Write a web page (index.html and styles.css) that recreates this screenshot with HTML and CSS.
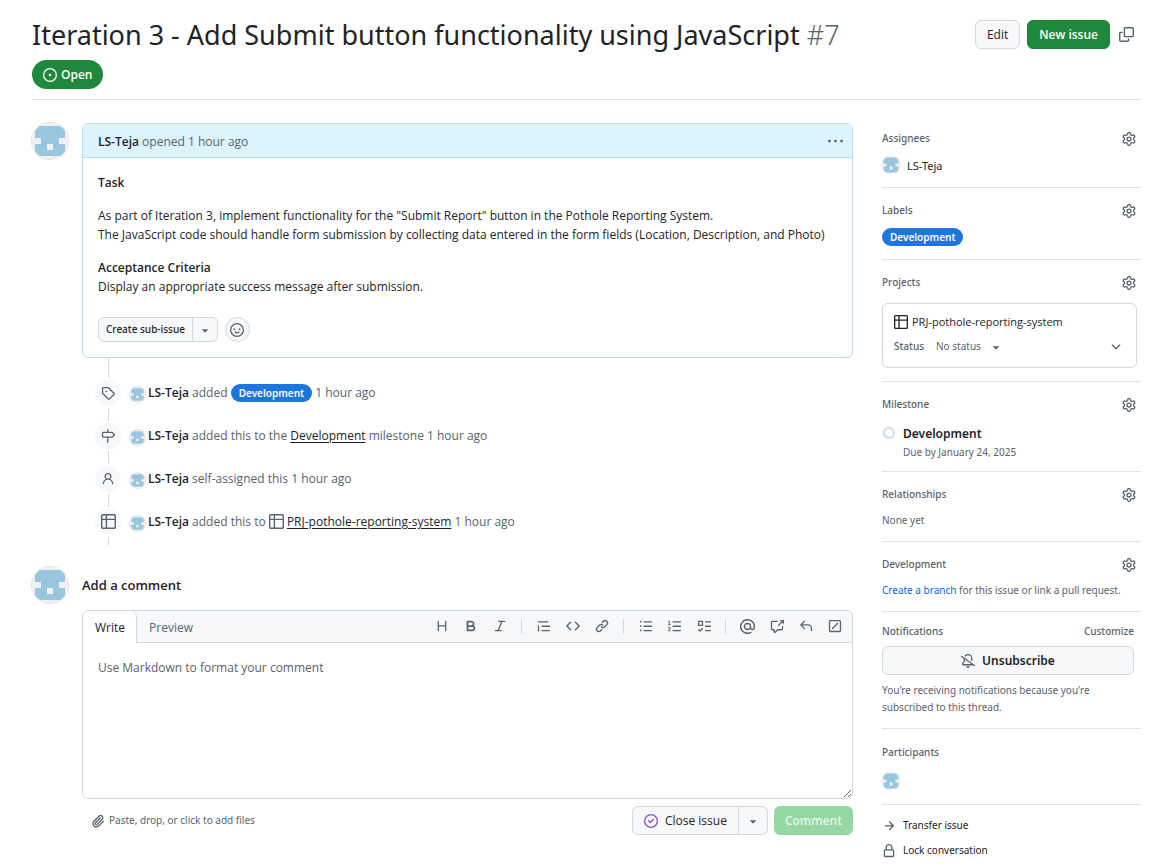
FILE: index.html
```html
<!DOCTYPE html>
<html lang="en">
<head>
<meta charset="utf-8">
<meta name="viewport" content="width=device-width, initial-scale=1">
<title>Iteration 3 - Add Submit button functionality using JavaScript · Issue #7</title>
<link rel="stylesheet" href="styles.css">
</head>
<body>
<svg class="sprite" aria-hidden="true">
  <symbol id="i-avatar" viewBox="0 0 36 36"><path fill="#f0f0f0" d="M0 0h36v36H0z"/><path fill="#98c6df" d="M3 3h30v12h-6v6h6v12H3V21h6v-6H3z"/><path fill="#f0f0f0" d="M15 21h6v6h-6z"/></symbol>
  <symbol id="i-open" viewBox="0 0 16 16"><path d="M8 9.5a1.5 1.5 0 1 0 0-3 1.5 1.5 0 0 0 0 3Z"/><path d="M8 0a8 8 0 1 1 0 16A8 8 0 0 1 8 0ZM1.5 8a6.5 6.5 0 1 0 13 0 6.5 6.5 0 0 0-13 0Z"/></symbol>
  <symbol id="i-copy" viewBox="0 0 16 16"><path d="M0 6.75C0 5.784.784 5 1.75 5h1.5a.75.75 0 0 1 0 1.5h-1.5a.25.25 0 0 0-.25.25v7.5c0 .138.112.25.25.25h7.5a.25.25 0 0 0 .25-.25v-1.5a.75.75 0 0 1 1.5 0v1.5A1.75 1.75 0 0 1 9.25 16h-7.5A1.75 1.75 0 0 1 0 14.25Z"/><path d="M5 1.75C5 .784 5.784 0 6.75 0h7.5C15.216 0 16 .784 16 1.75v7.5A1.75 1.75 0 0 1 14.25 11h-7.5A1.75 1.75 0 0 1 5 9.25Zm1.75-.25a.25.25 0 0 0-.25.25v7.5c0 .138.112.25.25.25h7.5a.25.25 0 0 0 .25-.25v-7.5a.25.25 0 0 0-.25-.25Z"/></symbol>
  <symbol id="i-kebab" viewBox="0 0 16 16"><path d="M8 9a1.5 1.5 0 1 0 0-3 1.5 1.5 0 0 0 0 3ZM1.5 9a1.5 1.5 0 1 0 0-3 1.5 1.5 0 0 0 0 3Zm13 0a1.5 1.5 0 1 0 0-3 1.5 1.5 0 0 0 0 3Z"/></symbol>
  <symbol id="i-caret" viewBox="0 0 16 16"><path d="m4.427 7.427 3.396 3.396a.25.25 0 0 0 .354 0l3.396-3.396A.25.25 0 0 0 11.396 7H4.604a.25.25 0 0 0-.177.427Z"/></symbol>
  <symbol id="i-smiley" viewBox="0 0 16 16"><path d="M8 0a8 8 0 1 1 0 16A8 8 0 0 1 8 0ZM1.5 8a6.5 6.5 0 1 0 13 0 6.5 6.5 0 0 0-13 0Zm3.82 1.636a.75.75 0 0 1 1.038.175l.007.009c.103.118.22.222.35.31.264.178.683.37 1.285.37.602 0 1.02-.192 1.285-.371.13-.088.247-.192.35-.31l.007-.008a.75.75 0 0 1 1.222.87l-.022-.015c.02.013.021.015.021.015v.001l-.001.002-.002.003-.005.007-.014.019a2.066 2.066 0 0 1-.184.213c-.16.166-.338.316-.53.445-.63.418-1.37.638-2.127.629-.946 0-1.652-.308-2.126-.63a3.331 3.331 0 0 1-.715-.657l-.014-.02-.005-.006-.002-.003v-.002h-.001l.613-.432-.614.43a.75.75 0 0 1 .183-1.044ZM12 7a1 1 0 1 1-2 0 1 1 0 0 1 2 0ZM5 8a1 1 0 1 1 0-2 1 1 0 0 1 0 2Z"/></symbol>
  <symbol id="i-tag" viewBox="0 0 16 16"><path d="M1 7.775V2.75C1 1.784 1.784 1 2.75 1h5.025c.464 0 .91.184 1.238.513l6.25 6.25a1.75 1.75 0 0 1 0 2.474l-5.026 5.026a1.75 1.75 0 0 1-2.474 0l-6.25-6.25A1.752 1.752 0 0 1 1 7.775Zm1.5 0c0 .066.026.13.073.177l6.25 6.25a.25.25 0 0 0 .354 0l5.025-5.025a.25.25 0 0 0 0-.354l-6.25-6.25a.25.25 0 0 0-.177-.073H2.75a.25.25 0 0 0-.25.25ZM6 5a1 1 0 1 1 0 2 1 1 0 0 1 0-2Z"/></symbol>
  <symbol id="i-milestone" viewBox="0 0 16 16"><path d="M7.75 0a.75.75 0 0 1 .75.75V3h3.634c.414 0 .814.147 1.13.414l2.07 1.75a1.75 1.75 0 0 1 0 2.672l-2.07 1.75a1.75 1.75 0 0 1-1.13.414H8.5v5.25a.75.75 0 0 1-1.5 0V10H2.75A1.75 1.75 0 0 1 1 8.25v-3.5C1 3.784 1.784 3 2.75 3H7V.75A.75.75 0 0 1 7.75 0Zm4.384 8.5a.25.25 0 0 0 .161-.06l2.07-1.75a.248.248 0 0 0 0-.38l-2.07-1.75a.25.25 0 0 0-.161-.06H2.75a.25.25 0 0 0-.25.25v3.5c0 .138.112.25.25.25h9.384Z"/></symbol>
  <symbol id="i-person" viewBox="0 0 16 16"><path d="M10.561 8.073a6.005 6.005 0 0 1 3.432 5.142.75.75 0 1 1-1.498.07 4.5 4.5 0 0 0-8.99 0 .75.75 0 0 1-1.498-.07 6.004 6.004 0 0 1 3.431-5.142 3.999 3.999 0 1 1 5.123 0ZM10.5 5a2.5 2.5 0 1 0-5 0 2.5 2.5 0 0 0 5 0Z"/></symbol>
  <symbol id="i-table" viewBox="0 0 16 16"><path d="M0 1.75C0 .784.784 0 1.75 0h12.5C15.216 0 16 .784 16 1.75v12.5A1.75 1.75 0 0 1 14.25 16H1.75A1.75 1.75 0 0 1 0 14.25ZM6.5 6.5v8h7.75a.25.25 0 0 0 .25-.25V6.5Zm8-1.5V1.75a.25.25 0 0 0-.25-.25H6.5V5Zm-13 1.5v7.75c0 .138.112.25.25.25H5v-8ZM5 5V1.5H1.75a.25.25 0 0 0-.25.25V5Z"/></symbol>
  <symbol id="i-gear" viewBox="0 0 16 16"><path d="M8 0a8.2 8.2 0 0 1 .701.031C9.444.095 9.99.645 10.16 1.29l.288 1.107c.018.066.079.158.212.224.231.114.454.243.668.386.123.082.233.09.299.071l1.103-.303c.644-.176 1.392.021 1.82.63.27.385.506.792.704 1.218.315.675.111 1.422-.364 1.891l-.814.806c-.049.048-.098.147-.088.294.016.257.016.515 0 .772-.01.147.038.246.088.294l.814.806c.475.469.679 1.216.364 1.891a7.977 7.977 0 0 1-.704 1.217c-.428.61-1.176.807-1.82.63l-1.102-.302c-.067-.019-.177-.011-.3.071a5.909 5.909 0 0 1-.668.386c-.133.066-.194.158-.211.224l-.29 1.106c-.168.646-.715 1.196-1.458 1.26a8.006 8.006 0 0 1-1.402 0c-.743-.064-1.289-.614-1.458-1.26l-.289-1.106c-.018-.066-.079-.158-.212-.224a5.738 5.738 0 0 1-.668-.386c-.123-.082-.233-.09-.299-.071l-1.103.303c-.644.176-1.392-.021-1.82-.63a8.12 8.12 0 0 1-.704-1.218c-.315-.675-.111-1.422.363-1.891l.815-.806c.05-.048.098-.147.088-.294a6.214 6.214 0 0 1 0-.772c.01-.147-.038-.246-.088-.294l-.815-.806C.635 6.045.431 5.298.746 4.623a7.92 7.92 0 0 1 .704-1.217c.428-.61 1.176-.807 1.82-.63l1.102.302c.067.019.177.011.3-.071.214-.143.437-.272.668-.386.133-.066.194-.158.211-.224l.29-1.106C6.009.645 6.556.095 7.299.03 7.53.01 7.764 0 8 0Zm-.571 1.525c-.036.003-.108.036-.137.146l-.289 1.105c-.147.561-.549.967-.998 1.189-.173.086-.34.183-.5.29-.417.278-.97.423-1.529.27l-1.103-.303c-.109-.03-.175.016-.195.045-.22.312-.412.644-.573.99-.014.031-.021.11.059.19l.815.806c.411.406.562.957.53 1.456a4.709 4.709 0 0 0 0 .582c.032.499-.119 1.05-.53 1.456l-.815.806c-.081.08-.073.159-.059.19.162.346.353.677.573.989.02.03.085.076.195.046l1.102-.303c.56-.153 1.113-.008 1.53.27.161.107.328.204.501.29.447.222.85.629.997 1.189l.289 1.105c.029.109.101.143.137.146a6.6 6.6 0 0 0 1.142 0c.036-.003.108-.036.137-.146l.289-1.105c.147-.561.549-.967.998-1.189.173-.086.34-.183.5-.29.417-.278.97-.423 1.529-.27l1.103.303c.109.029.175-.016.195-.045.22-.313.411-.644.573-.99.014-.031.021-.11-.059-.19l-.815-.806c-.411-.406-.562-.957-.53-1.456a4.709 4.709 0 0 0 0-.582c-.032-.499.119-1.05.53-1.456l.815-.806c.081-.08.073-.159.059-.19a6.464 6.464 0 0 0-.573-.989c-.02-.03-.085-.076-.195-.046l-1.102.303c-.56.153-1.113.008-1.53-.27a4.44 4.44 0 0 0-.501-.29c-.447-.222-.85-.629-.997-1.189l-.289-1.105c-.029-.11-.101-.143-.137-.146a6.6 6.6 0 0 0-1.142 0ZM11 8a3 3 0 1 1-6 0 3 3 0 0 1 6 0ZM9.5 8a1.5 1.5 0 1 0-3.001.001A1.5 1.5 0 0 0 9.5 8Z"/></symbol>
  <symbol id="i-chevron" viewBox="0 0 16 16"><path d="M12.78 5.22a.749.749 0 0 1 0 1.06l-4.25 4.25a.749.749 0 0 1-1.06 0L3.22 6.28a.749.749 0 1 1 1.06-1.06L8 8.939l3.72-3.719a.749.749 0 0 1 1.06 0Z"/></symbol>
  <symbol id="i-bell-slash" viewBox="0 0 16 16"><path d="m4.182 4.31.016.011 10.104 7.316.013.01 1.375.996a.75.75 0 1 1-.88 1.214L13.626 13H2.518a1.516 1.516 0 0 1-1.263-2.36l1.703-2.554A.255.255 0 0 0 3 7.947V5.305L.31 3.357a.75.75 0 1 1 .88-1.214Zm7.373 7.19L4.5 6.391v1.556c0 .346-.102.683-.294.97l-1.703 2.556a.017.017 0 0 0-.003.01c0 .005.002.009.005.012l.006.004.007.001ZM8 1.5c-.997 0-1.895.416-2.534 1.086A.75.75 0 1 1 4.38 1.55 5 5 0 0 1 13 5v2.373a.75.75 0 0 1-1.5 0V5A3.5 3.5 0 0 0 8 1.5ZM8 16a2 2 0 0 1-1.985-1.75c-.017-.137.097-.25.235-.25h3.5c.138 0 .252.113.235.25A2 2 0 0 1 8 16Z"/></symbol>
  <symbol id="i-arrow" viewBox="0 0 16 16"><path d="M8.22 2.97a.75.75 0 0 1 1.06 0l4.25 4.25a.75.75 0 0 1 0 1.06l-4.25 4.25a.751.751 0 0 1-1.042-.018.751.751 0 0 1-.018-1.042l2.97-2.97H3.75a.75.75 0 0 1 0-1.5h7.44L8.22 4.03a.75.75 0 0 1 0-1.06Z"/></symbol>
  <symbol id="i-lock" viewBox="0 0 16 16"><path d="M4 4a4 4 0 0 1 8 0v2h.25c.966 0 1.75.784 1.75 1.75v5.5A1.75 1.75 0 0 1 12.25 15h-8.5A1.75 1.75 0 0 1 2 13.25v-5.5C2 6.784 2.784 6 3.75 6H4Zm8.25 3.5h-8.5a.25.25 0 0 0-.25.25v5.5c0 .138.112.25.25.25h8.5a.25.25 0 0 0 .25-.25v-5.5a.25.25 0 0 0-.25-.25ZM10.5 6V4a2.5 2.5 0 1 0-5 0v2Z"/></symbol>
  <symbol id="i-closed" viewBox="0 0 16 16"><path d="M11.28 6.78a.75.75 0 0 0-1.06-1.06L7.25 8.69 5.78 7.22a.75.75 0 0 0-1.06 1.06l2 2a.75.75 0 0 0 1.06 0l3.5-3.5Z"/><path d="M16 8A8 8 0 1 1 0 8a8 8 0 0 1 16 0Zm-1.5 0a6.5 6.5 0 1 0-13 0 6.5 6.5 0 0 0 13 0Z"/></symbol>
  <symbol id="i-clip" viewBox="0 0 16 16"><path d="M12.212 3.02a1.753 1.753 0 0 0-2.478.003l-5.83 5.83a3.007 3.007 0 0 0-.88 2.127c0 .795.315 1.551.88 2.116.567.567 1.333.89 2.126.89.79 0 1.548-.321 2.116-.89l5.48-5.48a.75.75 0 0 1 1.061 1.06l-5.48 5.48a4.492 4.492 0 0 1-3.177 1.33c-1.2 0-2.345-.487-3.187-1.33a4.483 4.483 0 0 1-1.32-3.177c0-1.195.475-2.341 1.32-3.186l5.83-5.83a3.25 3.25 0 0 1 5.553 2.297c0 .863-.343 1.691-.953 2.301L7.439 12.39c-.375.377-.884.59-1.416.593a1.998 1.998 0 0 1-1.412-.593 1.992 1.992 0 0 1 0-2.828l5.48-5.48a.751.751 0 0 1 1.042.018.751.751 0 0 1 .018 1.042l-5.48 5.48a.492.492 0 0 0 0 .707.499.499 0 0 0 .352.154.51.51 0 0 0 .356-.154l5.833-5.827a1.755 1.755 0 0 0 0-2.481Z"/></symbol>
  <symbol id="i-heading" viewBox="0 0 16 16"><path d="M3.75 2a.75.75 0 0 1 .75.75V7h7V2.75a.75.75 0 0 1 1.5 0v10.5a.75.75 0 0 1-1.5 0V8.5h-7v4.75a.75.75 0 0 1-1.5 0V2.75A.75.75 0 0 1 3.75 2Z"/></symbol>
  <symbol id="i-bold" viewBox="0 0 16 16"><path d="M4 2h4.5a3.501 3.501 0 0 1 2.852 5.53A3.499 3.499 0 0 1 9.5 14H4a1 1 0 0 1-1-1V3a1 1 0 0 1 1-1Zm1 7v3h4.5a1.5 1.5 0 0 0 0-3Zm3.5-2a1.5 1.5 0 0 0 0-3H5v3Z"/></symbol>
  <symbol id="i-italic" viewBox="0 0 16 16"><path d="M6 2.75A.75.75 0 0 1 6.75 2h6.5a.75.75 0 0 1 0 1.5h-2.505l-3.858 9H9.25a.75.75 0 0 1 0 1.5h-6.5a.75.75 0 0 1 0-1.5h2.505l3.858-9H6.75A.75.75 0 0 1 6 2.75Z"/></symbol>
  <symbol id="i-quote" viewBox="0 0 16 16"><path d="M1.75 2.5h10.5a.75.75 0 0 1 0 1.5H1.75a.75.75 0 0 1 0-1.5Zm4 5h8.5a.75.75 0 0 1 0 1.5h-8.5a.75.75 0 0 1 0-1.5Zm0 5h8.5a.75.75 0 0 1 0 1.5h-8.5a.75.75 0 0 1 0-1.5ZM2.5 7.75v6a.75.75 0 0 1-1.5 0v-6a.75.75 0 0 1 1.5 0Z"/></symbol>
  <symbol id="i-code" viewBox="0 0 16 16"><path d="m11.28 3.22 4.25 4.25a.75.75 0 0 1 0 1.06l-4.25 4.25a.749.749 0 0 1-1.275-.326.749.749 0 0 1 .215-.734L13.94 8l-3.72-3.72a.749.749 0 0 1 .326-1.275.749.749 0 0 1 .734.215Zm-6.56 0a.751.751 0 0 1 1.042.018.751.751 0 0 1 .018 1.042L2.06 8l3.72 3.72a.749.749 0 0 1-.326 1.275.749.749 0 0 1-.734-.215L.47 8.53a.75.75 0 0 1 0-1.06Z"/></symbol>
  <symbol id="i-link" viewBox="0 0 16 16"><path d="m7.775 3.275 1.25-1.25a3.5 3.5 0 1 1 4.95 4.95l-2.5 2.5a3.5 3.5 0 0 1-4.95 0 .751.751 0 0 1 .018-1.042.751.751 0 0 1 1.042-.018 1.998 1.998 0 0 0 2.83 0l2.5-2.5a2.002 2.002 0 0 0-2.83-2.83l-1.25 1.25a.751.751 0 0 1-1.042-.018.751.751 0 0 1-.018-1.042Zm-4.69 9.64a1.998 1.998 0 0 0 2.83 0l1.25-1.25a.751.751 0 0 1 1.042.018.751.751 0 0 1 .018 1.042l-1.25 1.25a3.5 3.5 0 1 1-4.95-4.95l2.5-2.5a3.5 3.5 0 0 1 4.95 0 .751.751 0 0 1-.018 1.042.751.751 0 0 1-1.042.018 1.998 1.998 0 0 0-2.83 0l-2.5 2.5a1.998 1.998 0 0 0 0 2.83Z"/></symbol>
  <symbol id="i-ul" viewBox="0 0 16 16"><path d="M5.75 2.5h8.5a.75.75 0 0 1 0 1.5h-8.5a.75.75 0 0 1 0-1.5Zm0 5h8.5a.75.75 0 0 1 0 1.5h-8.5a.75.75 0 0 1 0-1.5Zm0 5h8.5a.75.75 0 0 1 0 1.5h-8.5a.75.75 0 0 1 0-1.5ZM2 14a1 1 0 1 1 0-2 1 1 0 0 1 0 2Zm1-6a1 1 0 1 1-2 0 1 1 0 0 1 2 0ZM2 4a1 1 0 1 1 0-2 1 1 0 0 1 0 2Z"/></symbol>
  <symbol id="i-ol" viewBox="0 0 16 16"><path d="M5 3.25a.75.75 0 0 1 .75-.75h8.5a.75.75 0 0 1 0 1.5h-8.5A.75.75 0 0 1 5 3.25Zm0 5a.75.75 0 0 1 .75-.75h8.5a.75.75 0 0 1 0 1.5h-8.5A.75.75 0 0 1 5 8.25Zm0 5a.75.75 0 0 1 .75-.75h8.5a.75.75 0 0 1 0 1.5h-8.5a.75.75 0 0 1-.75-.75ZM.924 10.32a.5.5 0 0 1-.851-.525l.001-.001.001-.002.002-.004.007-.011c.097-.144.215-.273.348-.384.228-.19.588-.392 1.068-.392.468 0 .858.181 1.126.484.259.294.377.673.377 1.038 0 .987-.686 1.495-1.156 1.845l-.047.035c-.303.225-.522.4-.654.597h1.357a.5.5 0 0 1 0 1H.5a.5.5 0 0 1-.5-.5c0-1.005.692-1.52 1.167-1.875l.035-.025c.531-.396.8-.625.8-1.078a.57.57 0 0 0-.128-.376C1.806 10.068 1.695 10 1.5 10a.658.658 0 0 0-.429.163.835.835 0 0 0-.144.153ZM2.003 2.5V6h.503a.5.5 0 0 1 0 1H.5a.5.5 0 0 1 0-1h.503V3.308l-.28.14a.5.5 0 0 1-.446-.895l1.003-.5a.5.5 0 0 1 .723.447Z"/></symbol>
  <symbol id="i-tasks" viewBox="0 0 16 16"><path d="M2 2h4a1 1 0 0 1 1 1v4a1 1 0 0 1-1 1H2a1 1 0 0 1-1-1V3a1 1 0 0 1 1-1Zm4.655 8.595a.75.75 0 0 1 0 1.06L4.03 14.28a.75.75 0 0 1-1.06 0l-1.5-1.5a.749.749 0 0 1 .326-1.275.749.749 0 0 1 .734.215l.97.97 2.095-2.095a.75.75 0 0 1 1.06 0ZM9.75 2.5h5.5a.75.75 0 0 1 0 1.5h-5.5a.75.75 0 0 1 0-1.5Zm0 5h5.5a.75.75 0 0 1 0 1.5h-5.5a.75.75 0 0 1 0-1.5Zm0 5h5.5a.75.75 0 0 1 0 1.5h-5.5a.75.75 0 0 1 0-1.5Zm-7.25-9v3h3v-3Z"/></symbol>
  <symbol id="i-mention" viewBox="0 0 16 16"><path d="M4.75 2.37a6.501 6.501 0 0 0 6.5 11.26.75.75 0 0 1 .75 1.298A7.999 7.999 0 0 1 .989 4.148 8 8 0 0 1 16 7.75v1.5a2.75 2.75 0 0 1-5.072 1.475 3.999 3.999 0 0 1-6.65-4.19A4 4 0 0 1 12 8v1.25a1.25 1.25 0 0 0 2.5 0V7.867a6.5 6.5 0 0 0-9.75-5.496ZM10.5 8a2.5 2.5 0 1 0-5 0 2.5 2.5 0 0 0 5 0Z"/></symbol>
  <symbol id="i-xref" viewBox="0 0 16 16"><path d="M2.75 3.5a.25.25 0 0 0-.25.25v7.5c0 .138.112.25.25.25h2a.75.75 0 0 1 .75.75v2.19l2.72-2.72a.749.749 0 0 1 .53-.22h4.5a.25.25 0 0 0 .25-.25v-2.5a.75.75 0 0 1 1.5 0v2.5A1.75 1.75 0 0 1 13.25 13H9.06l-2.573 2.573A1.458 1.458 0 0 1 4 14.543V13H2.75A1.75 1.75 0 0 1 1 11.25v-7.5C1 2.784 1.784 2 2.75 2h5.5a.75.75 0 0 1 0 1.5ZM16 1.25v4.146a.25.25 0 0 1-.427.177L14.03 4.03l-3.75 3.75a.749.749 0 0 1-1.275-.326.749.749 0 0 1 .215-.734l3.75-3.75-1.543-1.543A.25.25 0 0 1 11.604 1h4.146a.25.25 0 0 1 .25.25Z"/></symbol>
  <symbol id="i-reply" viewBox="0 0 16 16"><path d="M6.78 1.97a.75.75 0 0 1 0 1.06L3.81 6h6.44A4.75 4.75 0 0 1 15 10.75v2.5a.75.75 0 0 1-1.5 0v-2.5a3.25 3.25 0 0 0-3.25-3.25H3.81l2.97 2.97a.749.749 0 0 1-.326 1.275.749.749 0 0 1-.734-.215L1.47 7.28a.75.75 0 0 1 0-1.06l4.25-4.25a.75.75 0 0 1 1.06 0Z"/></symbol>
  <symbol id="i-slash" viewBox="0 0 16 16"><path fill="none" stroke="currentColor" stroke-width="1.5" stroke-linecap="round" d="M2.75 1.75h10.5a1 1 0 0 1 1 1v10.5a1 1 0 0 1-1 1H2.75a1 1 0 0 1-1-1V2.75a1 1 0 0 1 1-1ZM5.2 10.8l5.6-5.6"/></symbol>
</svg>

<div class="page">
  <header class="issue-header">
    <div class="title-row">
      <h1 class="title">Iteration 3 - Add Submit button functionality using JavaScript <span class="number">#7</span></h1>
      <div class="title-actions">
        <button class="btn" type="button">Edit</button>
        <button class="btn btn-primary" type="button">New issue</button>
        <button class="icon-btn" type="button" aria-label="Copy link"><svg class="icon icon-m"><use href="#i-copy"/></svg></button>
      </div>
    </div>
    <span class="state"><svg class="icon"><use href="#i-open"/></svg>Open</span>
  </header>

  <div class="columns">
    <main class="main">
      <div class="entry">
        <svg class="avatar avatar-l" role="img" aria-label="LS-Teja"><use href="#i-avatar"/></svg>
        <div class="thread">
          <article class="comment">
            <div class="comment-head">
              <p class="byline"><a class="author" href="#">LS-Teja</a> opened 1 hour ago</p>
              <button class="icon-btn" type="button" aria-label="Comment actions"><svg class="icon icon-m"><use href="#i-kebab"/></svg></button>
            </div>
            <div class="comment-body">
              <p><strong>Task</strong></p>
              <p>As part of Iteration 3, implement functionality for the "Submit Report" button in the Pothole Reporting System.<br>The JavaScript code should handle form submission by collecting data entered in the form fields (Location, Description, and Photo)</p>
              <p><strong>Acceptance Criteria</strong><br>Display an appropriate success message after submission.</p>
              <div class="comment-tools">
                <div class="btn-group">
                  <button class="btn btn-small" type="button">Create sub-issue</button>
                  <button class="btn btn-small btn-caret" type="button" aria-label="More sub-issue options"><svg class="icon"><use href="#i-caret"/></svg></button>
                </div>
                <button class="react" type="button" aria-label="Add reaction"><svg class="icon"><use href="#i-smiley"/></svg></button>
              </div>
            </div>
          </article>
          <ul class="events">
            <li class="event"><span class="badge"><svg class="icon"><use href="#i-tag"/></svg></span><p><svg class="avatar avatar-s"><use href="#i-avatar"/></svg><a class="author" href="#">LS-Teja</a> added <a class="label" href="#">Development</a> 1 hour ago</p></li>
            <li class="event"><span class="badge"><svg class="icon"><use href="#i-milestone"/></svg></span><p><svg class="avatar avatar-s"><use href="#i-avatar"/></svg><a class="author" href="#">LS-Teja</a> added this to the <a class="ref" href="#">Development</a> milestone 1 hour ago</p></li>
            <li class="event"><span class="badge"><svg class="icon"><use href="#i-person"/></svg></span><p><svg class="avatar avatar-s"><use href="#i-avatar"/></svg><a class="author" href="#">LS-Teja</a> self-assigned this 1 hour ago</p></li>
            <li class="event"><span class="badge"><svg class="icon icon-m"><use href="#i-table"/></svg></span><p><svg class="avatar avatar-s"><use href="#i-avatar"/></svg><a class="author" href="#">LS-Teja</a> added this to <svg class="icon icon-m inline"><use href="#i-table"/></svg> <a class="ref" href="#">PRJ-pothole-reporting-system</a> 1 hour ago</p></li>
          </ul>
        </div>
      </div>

      <div class="entry">
        <svg class="avatar avatar-l" role="img" aria-label="LS-Teja"><use href="#i-avatar"/></svg>
        <form class="composer">
          <h2 class="composer-title"><label for="comment">Add a comment</label></h2>
          <div class="editor">
            <div class="editor-head">
              <div class="tabs">
                <button class="tab tab-on" type="button">Write</button>
                <button class="tab" type="button">Preview</button>
              </div>
              <div class="toolbar">
                <button class="tool" type="button" aria-label="Heading"><svg class="icon"><use href="#i-heading"/></svg></button>
                <button class="tool" type="button" aria-label="Bold"><svg class="icon"><use href="#i-bold"/></svg></button>
                <button class="tool" type="button" aria-label="Italic"><svg class="icon"><use href="#i-italic"/></svg></button>
                <span class="sep"></span>
                <button class="tool" type="button" aria-label="Quote"><svg class="icon"><use href="#i-quote"/></svg></button>
                <button class="tool" type="button" aria-label="Code"><svg class="icon"><use href="#i-code"/></svg></button>
                <button class="tool" type="button" aria-label="Link"><svg class="icon"><use href="#i-link"/></svg></button>
                <span class="sep"></span>
                <button class="tool" type="button" aria-label="Unordered list"><svg class="icon"><use href="#i-ul"/></svg></button>
                <button class="tool" type="button" aria-label="Numbered list"><svg class="icon"><use href="#i-ol"/></svg></button>
                <button class="tool" type="button" aria-label="Task list"><svg class="icon"><use href="#i-tasks"/></svg></button>
                <span class="sep"></span>
                <button class="tool" type="button" aria-label="Mention"><svg class="icon icon-m"><use href="#i-mention"/></svg></button>
                <button class="tool" type="button" aria-label="Reference"><svg class="icon"><use href="#i-xref"/></svg></button>
                <button class="tool" type="button" aria-label="Saved replies"><svg class="icon"><use href="#i-reply"/></svg></button>
                <button class="tool" type="button" aria-label="Slash commands"><svg class="icon"><use href="#i-slash"/></svg></button>
              </div>
            </div>
            <textarea class="text" id="comment" placeholder="Use Markdown to format your comment"></textarea>
          </div>
          <div class="composer-foot">
            <button class="attach" type="button"><svg class="icon"><use href="#i-clip"/></svg>Paste, drop, or click to add files</button>
            <div class="submit">
              <div class="btn-group">
                <button class="btn btn-close" type="button"><svg class="icon done"><use href="#i-closed"/></svg>Close issue</button>
                <button class="btn btn-caret" type="button" aria-label="More close options"><svg class="icon"><use href="#i-caret"/></svg></button>
              </div>
              <button class="btn btn-primary" type="button" disabled>Comment</button>
            </div>
          </div>
        </form>
      </div>
    </main>

    <aside class="sidebar">
      <section class="box">
        <h2 class="box-head">Assignees<button class="icon-btn" type="button" aria-label="Edit assignees"><svg class="icon"><use href="#i-gear"/></svg></button></h2>
        <a class="assignee" href="#"><svg class="avatar avatar-m"><use href="#i-avatar"/></svg>LS-Teja</a>
      </section>
      <section class="box">
        <h2 class="box-head">Labels<button class="icon-btn" type="button" aria-label="Edit labels"><svg class="icon"><use href="#i-gear"/></svg></button></h2>
        <a class="label" href="#">Development</a>
      </section>
      <section class="box">
        <h2 class="box-head">Projects<button class="icon-btn" type="button" aria-label="Edit projects"><svg class="icon"><use href="#i-gear"/></svg></button></h2>
        <div class="project">
          <a class="project-name" href="#"><svg class="icon"><use href="#i-table"/></svg>PRJ-pothole-reporting-system</a>
          <div class="status">
            <label class="status-name" for="status">Status</label>
            <select class="status-value" id="status"><option>No status</option></select>
            <svg class="icon status-caret"><use href="#i-caret"/></svg>
            <button class="icon-btn" type="button" aria-label="Expand project"><svg class="icon"><use href="#i-chevron"/></svg></button>
          </div>
        </div>
      </section>
      <section class="box box-milestone">
        <h2 class="box-head">Milestone<button class="icon-btn" type="button" aria-label="Edit milestone"><svg class="icon"><use href="#i-gear"/></svg></button></h2>
        <div class="milestone">
          <span class="ring"></span>
          <div><a class="milestone-name" href="#">Development</a><p>Due by January 24, 2025</p></div>
        </div>
      </section>
      <section class="box box-text">
        <h2 class="box-head">Relationships<button class="icon-btn" type="button" aria-label="Edit relationships"><svg class="icon"><use href="#i-gear"/></svg></button></h2>
        <p>None yet</p>
      </section>
      <section class="box box-text">
        <h2 class="box-head">Development<button class="icon-btn" type="button" aria-label="Edit development"><svg class="icon"><use href="#i-gear"/></svg></button></h2>
        <p><a class="blue" href="#">Create a branch</a> for this issue or link a pull request.</p>
      </section>
      <section class="box box-notify">
        <h2 class="box-head">Notifications<button class="customize" type="button">Customize</button></h2>
        <button class="btn btn-wide" type="button"><svg class="icon"><use href="#i-bell-slash"/></svg>Unsubscribe</button>
        <p>You're receiving notifications because you're<br>subscribed to this thread.</p>
      </section>
      <section class="box box-people">
        <h2 class="box-head">Participants</h2>
        <svg class="avatar avatar-m" role="img" aria-label="LS-Teja"><use href="#i-avatar"/></svg>
      </section>
      <section class="box box-actions">
        <button class="action" type="button"><svg class="icon"><use href="#i-arrow"/></svg>Transfer issue</button>
        <button class="action" type="button"><svg class="icon"><use href="#i-lock"/></svg>Lock conversation</button>
      </section>
    </aside>
  </div>
</div>
</body>
</html>
```
FILE: styles.css
```css
* { box-sizing: border-box; }

:root {
  --fg: #1f2328;
  --muted: #59636e;
  --line: #d1d9e0;
  --line-soft: #dfe3e8;
  --subtle: #f6f8fa;
  --green: #1f883d;
  --blue: #0969da;
  --alt: "Noto Sans", "Open Sans", sans-serif;
}

body {
  margin: 0;
  background: #fff;
  color: var(--fg);
  font: 12px/19px "Open Sans", "Noto Sans", sans-serif;
}

h1, h2, p, ul { margin: 0; padding: 0; font-weight: 400; }
ul { list-style: none; }
a { color: inherit; text-decoration: none; }
button, select, textarea { font: inherit; color: inherit; margin: 0; }
button { cursor: pointer; }
strong { font-weight: 600; }

.sprite { position: absolute; width: 0; height: 0; }
.icon { width: 14px; height: 14px; fill: currentColor; flex: none; display: block; }
.icon-m { width: 15px; height: 15px; }
.icon.inline { display: inline-block; vertical-align: -3px; }

.avatar { display: block; flex: none; border-radius: 50%; box-shadow: 0 0 0 1px #dfe1e4; }
.avatar-l { width: 36px; height: 36px; }
.avatar-m { width: 18px; height: 18px; box-shadow: 0 0 0 1px #eff1f3; }
.avatar-s { width: 15px; height: 15px; display: inline-block; vertical-align: -5px; margin-right: 3px; }

.page { padding: 18px 33px 0 32px; }

/* Header */
.issue-header { padding-bottom: 10px; border-bottom: 1px solid var(--line-soft); }
.title-row { display: flex; justify-content: space-between; align-items: flex-start; }
.title { font-family: var(--alt); font-size: 27px; line-height: 34px; margin-bottom: 8px; }
.number { color: var(--muted); font-weight: 300; }
.title-actions { display: flex; gap: 7px; padding-top: 2px; }
.title-actions .icon-btn { padding: 0 7px 0 2px; }
.state {
  display: inline-flex; align-items: center; gap: 4px; height: 29px; padding: 0 11px;
  border-radius: 15px; background: var(--green); color: #fff; font-weight: 600; vertical-align: top;
}

/* Buttons */
.btn {
  display: inline-flex; align-items: center; justify-content: center; gap: 7px; height: 29px; padding: 0 11px;
  border: 1px solid var(--line); border-radius: 6px; background: var(--subtle); color: var(--fg); font-weight: 500; white-space: nowrap;
}
.btn .icon { color: var(--muted); }
.btn .done { color: #8250df; }
.btn-primary { background: var(--green); border-color: #1c8139; color: #fff; font-weight: 600; }
.btn-primary:disabled { padding: 0 10px; background: #95d8a6; border-color: #95d8a6; color: #e4f6e8; }
.btn-small { height: 25px; padding: 0 7px; font-family: var(--alt); font-size: 10px; }
.btn-group { display: flex; }
.btn-group .btn:first-child { border-radius: 6px 0 0 6px; }
.btn-group .btn:last-child { border-radius: 0 6px 6px 0; border-left: 0; }
.btn-group .btn-caret { padding: 0 7px; }
.btn-group .btn-small.btn-caret { padding: 0 5px; }
.icon-btn { display: flex; align-items: center; border: 0; padding: 0; background: none; color: var(--muted); }

.author { color: var(--fg); font-weight: 600; }
.ref { color: var(--fg); text-decoration: underline; text-underline-offset: 2px; }
.blue { color: var(--blue); }
.label {
  display: inline-block; height: 18px; padding: 0 8px; border-radius: 9px; background: #1d76db; color: #fff;
  font-family: var(--alt); font-size: 10px; line-height: 18px; font-weight: 600; vertical-align: middle;
}

/* Columns */
.columns { display: grid; grid-template-columns: minmax(0, 1fr) 259px; gap: 29px; padding-top: 23px; }
.entry { display: grid; grid-template-columns: 36px minmax(0, 1fr); gap: 14px; }

/* Comment */
.comment { border: 1px solid #b6ddff; border-radius: 6px; }
.comment-head {
  display: flex; align-items: center; justify-content: space-between; height: 34px; padding: 1px 9px 0 15px;
  border-bottom: 1px solid #b6ddff; border-radius: 5px 5px 0 0; background: #ddf4ff; color: var(--muted);
}
.comment-body { padding: 15px; display: grid; gap: 14px; }
.comment-tools { display: flex; gap: 7px; padding-top: 7px; }
.react {
  display: grid; place-items: center; width: 25px; height: 25px; padding: 0;
  border: 1px solid var(--line); border-radius: 50%; background: var(--subtle); color: var(--muted);
}

/* Timeline */
.events {
  margin-left: 26px; padding: 13px 0 2px; border-left: 1px solid var(--line); margin-bottom: 22px;
}
.event { display: flex; align-items: center; gap: 8px; height: 43px; margin-left: -15px; color: var(--muted); }
.badge {
  display: grid; place-items: center; width: 28px; height: 30px; flex: none;
  border: 2px solid #fff; border-width: 2px 1px; border-radius: 50%; background: var(--subtle); color: var(--muted);
}

/* Comment form */
.composer-title { height: 36px; font-size: 13px; line-height: 36px; }
.composer-title label { font-weight: 600; }
.editor { margin-top: 7px; border: 1px solid var(--line); border-radius: 6px; overflow: hidden; }
.editor-head { display: flex; height: 32px; background: var(--subtle); justify-content: space-between; box-shadow: inset 0 -1px var(--line); }
.tabs { display: flex; }
.tab { border: 0; padding: 0 11px 0 12px; background: none; color: var(--muted); }
.tab-on { border-right: 1px solid var(--line); border-radius: 6px 6px 0 0; background: #fff; color: var(--fg); }
.toolbar { display: flex; align-items: center; padding: 0 3px 2px 0; }
.tool { display: grid; place-items: center; width: 29px; height: 29px; border: 0; padding: 0; background: none; color: var(--muted); }
.sep { width: 1px; height: 15px; margin: 0 7px; background: var(--line); }
.text { display: block; width: 100%; height: 155px; padding: 15px; border: 0; outline: 0; resize: vertical; background: #fff; }
.text::placeholder { color: var(--muted); opacity: 1; }
.composer-foot { display: flex; justify-content: space-between; align-items: center; padding-top: 7px; }
.attach { display: flex; align-items: center; gap: 4px; border: 0; padding: 0 9px; background: none; color: var(--muted); font-family: var(--alt); font-size: 10px; }
.submit { display: flex; gap: 6px; }
.btn-group .btn-close { padding: 0 11px; }

/* Sidebar */
.sidebar { font-family: var(--alt); font-size: 10px; line-height: 17px; color: var(--muted); }
.box { padding: 14px 0 13px; border-bottom: 1px solid var(--line-soft); }
.box:first-child { padding-top: 7px; }
.box-head { display: flex; justify-content: space-between; align-items: center; padding-right: 5px; margin-bottom: 9px; font-size: 10px; line-height: 17px; font-weight: 500; }
.assignee { display: flex; align-items: center; gap: 7px; color: var(--fg); font-size: 11px; }
.box > .label { display: block; width: fit-content; }
.project { margin: 12px 4px 0 0; padding: 9px 11px 12px; border: 1px solid var(--line); border-radius: 6px; }
.project-name { display: flex; align-items: center; gap: 4px; color: var(--fg); font: 500 11px/17px "Open Sans", "Noto Sans", sans-serif; }
.status { display: flex; align-items: center; margin-top: 8px; }
.status-name { margin-right: 12px; font-weight: 500; }
.status-value { appearance: none; border: 0; padding: 0; background: none; }
.status-caret { margin-left: 8px; }
.status .icon-btn { margin-left: auto; margin-right: 2px; }
.box-milestone { padding-bottom: 10px; }
.milestone { display: flex; gap: 8px; padding-top: 1px; }
.milestone-name { display: block; color: var(--fg); font-size: 12px; line-height: 21px; font-weight: 600; }
.ring { width: 12px; height: 12px; margin: 4px 0 0 1px; border: 2px solid var(--line); border-radius: 50%; }
.box-text { padding-bottom: 12px; }
.box-notify { padding: 11px 0 12px; }
.box-notify .box-head { margin-bottom: 6px; padding-right: 7px; }
.box-notify .btn { width: calc(100% - 7px); margin-bottom: 7px; font-size: 12px; font-weight: 600; }
.box-people { padding: 15px 0 14px; }
.box-people .box-head { margin-bottom: 11px; }
.customize { border: 0; padding: 0; background: none; color: var(--muted); }
.box-actions { border: 0; padding: 12px 0 0; display: grid; gap: 8px; justify-items: start; }
.action { display: flex; align-items: center; gap: 7px; border: 0; padding: 0; background: none; color: var(--fg); }
.action .icon { color: var(--muted); }
```
